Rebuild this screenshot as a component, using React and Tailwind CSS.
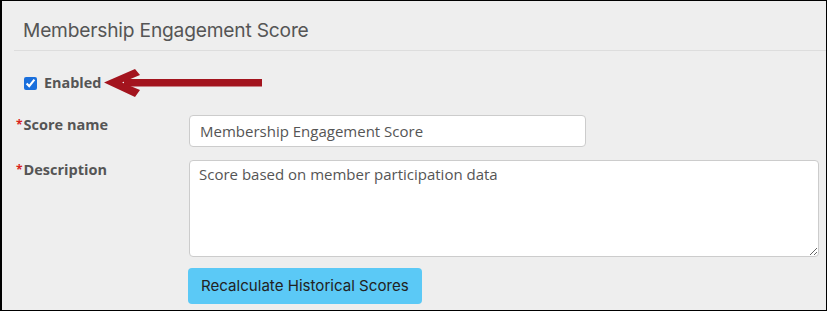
import React from "react";

export default function App() {
  return (
    <div className="w-[827px] h-[311px] bg-[#eeeeee] border border-black border-l-2 overflow-hidden" style={{ fontFamily: '"Open Sans", sans-serif' }}>
      <div className="pl-[12px]">
        <div className="h-[50px] border-b border-[#dddddd] flex items-center pl-[9px] pt-[10px]">
          <h1 className="text-[19.2px] text-[#555555]" style={{ fontFamily: 'Inter, "Open Sans", sans-serif', letterSpacing: "-0.2px" }}>Membership Engagement Score</h1>
        </div>
      </div>
      <div className="pl-[14px] pr-[7px]">
        <div className="h-[26px] mt-[19px] flex items-center pl-[8px] relative">
          <input type="checkbox" defaultChecked className="w-[13px] h-[13px] m-0 accent-[#1a6fdc]" />
          <span className="ml-[7px] text-[14.4px] font-bold text-[#555555]">Enabled</span>
          <svg className="absolute left-[88px] top-[-3px]" width="160" height="32" viewBox="0 0 160 32">
            <rect x="20" y="12" width="138" height="7.5" fill="#a3141e" />
            <polygon points="0,15.5 31,2 36,8 18,15.5 36,23 31,30" fill="#a3141e" />
          </svg>
        </div>
        <div className="grid grid-cols-[173px_1fr] gap-y-[13px] mt-[19px]">
          <label className="text-[14.5px] font-bold text-[#555555] -mt-[1px]">
            <span className="text-[#d9241c] text-[12px] mr-[1px] relative top-[-1px]">*</span>Score name
          </label>
          <input
            readOnly
            value="Membership Engagement Score"
            className="w-[397px] h-[32px] bg-white border border-[#cccccc] rounded-[4px] px-[10px] text-[15px] text-[#555555] outline-none"
          />
          <label className="text-[14.5px] font-bold text-[#555555] -mt-[1px]">
            <span className="text-[#d9241c] text-[12px] mr-[1px] relative top-[-1px]">*</span>Description
          </label>
          <textarea
            readOnly
            value="Score based on member participation data"
            className="w-[630px] h-[97px] bg-white border border-[#cccccc] rounded-[4px] px-[9px] pt-[2px] pb-[4px] text-[15px] text-[#555555] outline-none block"
          />
          <div />
          <div className="-mt-[2px] -ml-[1px]">
            <button className="h-[36px] px-[13px] bg-[#5bc9f6] rounded-[4px] text-[15.1px] text-[#222222]" style={{ fontFamily: 'Inter, "Open Sans", sans-serif' }}>
              Recalculate Historical Scores
            </button>
          </div>
        </div>
      </div>
    </div>
  );
}
